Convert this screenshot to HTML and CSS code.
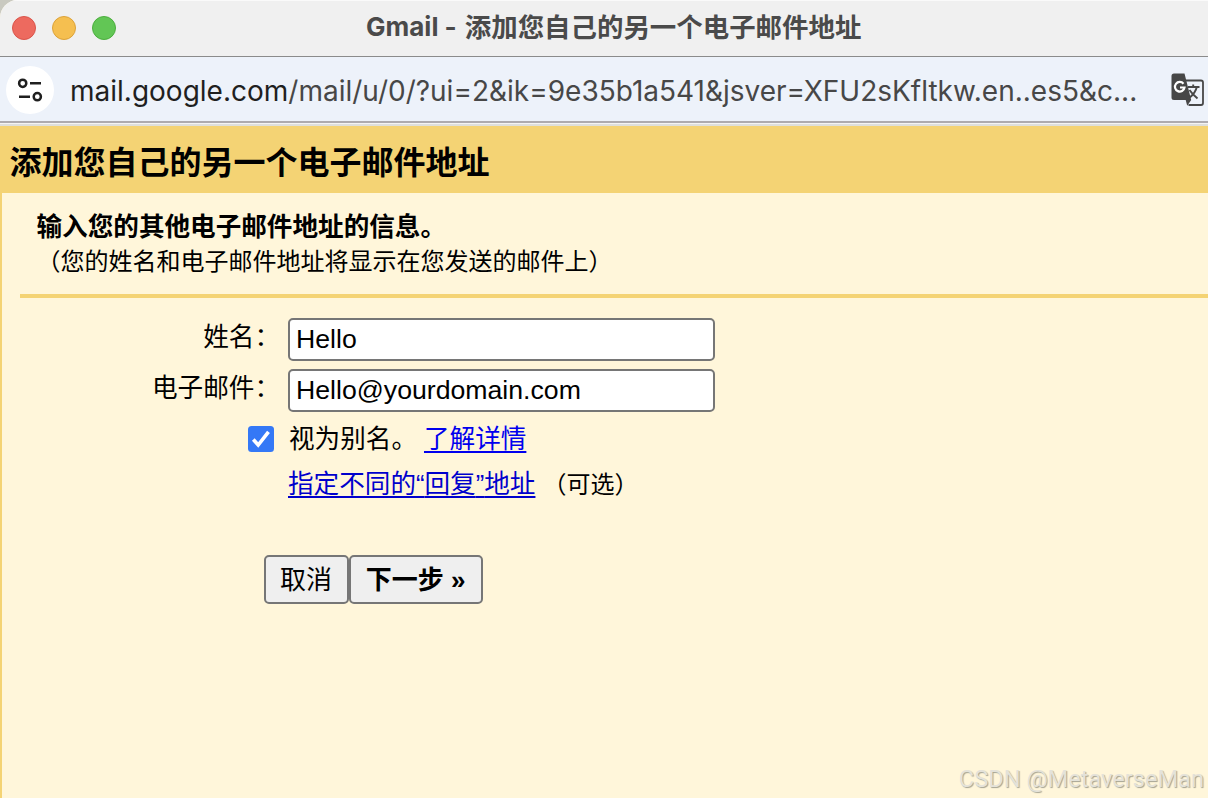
FILE: index.html
```html
<!doctype html>
<html lang="zh-CN">
 <head>
  <meta charset="UTF-8">
  <title>Gmail - 添加您自己的另一个电子邮件地址</title>
  <link rel="stylesheet" href="styles.css">
 </head>
 <body>

	<div id="wrap">

		<!-- 标题栏 -->
		<div class="titlebar">
			<div class="lights">
				<span class="light red"></span>
				<span class="light yellow"></span>
				<span class="light green"></span>
			</div>
			<div class="window_title"><span class="gmail">Gmail -</span> <span>添加您自己的另一个电子邮件地址</span></div>
		</div>

		<!-- 地址栏 -->
		<div class="urlbar">
			<div class="site_info">
				<svg width="48" height="48" viewBox="0 0 48 48" fill="none" stroke="#1f1f1f">
					<circle cx="16.7" cy="17.3" r="3.6" stroke-width="2.5"/>
					<circle cx="31.3" cy="30.7" r="3.6" stroke-width="2.5"/>
					<path d="M24 17.3h11M13 30.7h11" stroke-width="2.5"/>
				</svg>
			</div>
			<div class="url"><span class="host">mail.google.com</span><span class="path">/mail/u/0/?ui=2&amp;ik=9e35b1a541&amp;jsver=XFU2sKfltkw.en..es5&amp;c...</span></div>
			<svg class="translate" width="34" height="34" viewBox="0 0 34 34">
				<path d="M15 7.5h15a2 2 0 0 1 2 2v20.500a2 2 0 0 1-2 2H17.500" fill="none" stroke="#474747" stroke-width="1.8"/>
				<path d="M3 0.500h10.500l6.700 26.500-4 5.700-1.500-5.700H3a2.500 2.500 0 0 1-2.500-2.500V3A2.500 2.500 0 0 1 3 .5z" fill="#474747"/>
				<path d="M12.500 10.700a4.800 4.800 0 1 0 1 3.800H9" fill="none" stroke="#fff" stroke-width="2.2"/>
				<path d="M17 14h11.500M22.200 11.500v2.500M25.800 14c-1 4.500-3.500 7.500-7 10.500M18.500 17c2 3 4.500 5.500 8 8.500" fill="none" stroke="#474747" stroke-width="1.9"/>
			</svg>
		</div>

		<div class="page">
			<h1>添加您自己的另一个电子邮件地址</h1>

			<div class="content">
				<div class="intro">
					<b>输入您的其他电子邮件地址的信息。</b>
					<p>（您的姓名和电子邮件地址将显示在您发送的邮件上）</p>
				</div>

				<!-- 表单 -->
				<div class="form">
					<label class="name" for="name">姓名<span class="colon">：</span></label>
					<input type="text" id="name" value="Hello">

					<label class="name" for="email">电子邮件<span class="colon">：</span></label>
					<input type="text" id="email" value="Hello@yourdomain.com">

					<span class="check">
						<svg width="26" height="26" viewBox="0 0 26 26">
							<rect width="26" height="26" rx="3.500" fill="#3478f6"/>
							<path d="M5.300 13.500l4.900 5.500L20.500 5.800" fill="none" stroke="#fff" stroke-width="3.600"/>
						</svg>
					</span>
					<div class="alias">视为别名。<a href="#">了解详情</a></div>

					<div class="reply"><a href="#">指定不同的<i>“</i>回复<i>”</i>地址</a><span class="optional">（可选）</span></div>
				</div>

				<div class="buttons">
					<button type="button">取消</button>
					<button type="button" class="next">下一步 »</button>
				</div>
			</div>
		</div>

		<div class="watermark">CSDN @MetaverseMan</div>
	</div>

 </body>
</html>
```

FILE: styles.css
```css
*
{
	box-sizing:border-box;
}

body
{
	margin:0;
	background-color:#c9c9c0;
	font-family:"Liberation Sans", "Noto Sans CJK SC", sans-serif;
	color:#000;
}

#wrap
{
	position:relative;
	width:1208px;
	height:798px;
	overflow:hidden;
	display:flex;
	flex-direction:column;
	border-top-left-radius:18px;
	background-color:#fff6da;
}

/* 标题栏 */
.titlebar
{
	height:57px;
	display:grid;
	grid-template-columns:366px 1fr;
	align-items:center;
	padding-bottom:2px;
	background-color:#f0f0f0;
	border-top:1px solid #fafafa;
	border-bottom:1px solid #8b8b8b;
}

.lights
{
	display:flex;
	gap:16px;
	padding-left:12px;
}

.light
{
	width:24px;
	height:24px;
	border-radius:50%;
	border:1px solid;
}

.red { background-color:#ed6a5f; border-color:#d9554b; }
.yellow { background-color:#f5bf50; border-color:#dba23a; }
.green { background-color:#62c655; border-color:#4cae3e; }

.window_title
{
	display:flex;
	gap:8px;
	padding-bottom:3px;
	font-family:"Noto Sans CJK SC", sans-serif;
	font-size:26.45px;
	line-height:50px;
	font-weight:bold;
	color:#4a4a4a;
	white-space:nowrap;
}

.gmail
{
	padding-top:1px;
	font-family:Inter, sans-serif;
	font-size:26px;
}

/* 地址栏 */
.urlbar
{
	height:69px;
	display:flex;
	align-items:center;
	padding:0 3px 1px 6px;
	background-color:#edf2fa;
	border-bottom:2px solid #dedfdc;
	box-shadow:inset 0 -1px #f4f4f4, inset 0 -3px #adabaf;
}

.site_info
{
	width:48px;
	height:48px;
	border-radius:50%;
	background-color:#fff;
}

.url
{
	flex:1;
	margin-left:16px;
	padding-top:2px;
	font-family:Inter, sans-serif;
	font-size:28px;
	line-height:40px;
	white-space:nowrap;
	color:#474747;
}

.host
{
	color:#1f1f1f;
}

/* 页面 */
.page
{
	flex:1;
	display:flex;
	flex-direction:column;
}

h1
{
	margin:0;
	height:67px;
	padding:0 9.5px;
	font-size:32px;
	line-height:75px;
	background-color:#f4d374;
}

.content
{
	flex:1;
	padding:17px 0 0 18px;
	border-left:2px solid #f4d374;
}

.intro
{
	height:88px;
	padding-left:16.5px;
	border-bottom:4px solid #f4d374;
	font-size:25.6px;
	line-height:35px;
}

.intro b
{
	display:block;
}

.intro p
{
	margin:0;
	font-size:24px;
	line-height:34px;
}

.form
{
	display:grid;
	grid-template-columns:260px 427px;
	grid-template-rows:43px 43px 40px 34px;
	row-gap:8px;
	column-gap:8px;
	padding-top:20px;
	font-size:25.6px;
}

.name
{
	line-height:33px;
	text-align:right;
}

.colon
{
	font-family:"Noto Sans CJK TC", sans-serif;
}

input
{
	width:427px;
	height:43px;
	padding:0 6px;
	border:2px solid #767676;
	border-radius:5px;
	background-color:#fff;
	font-family:"Liberation Sans", sans-serif;
	font-size:26.67px;
	color:#000;
}

.check
{
	display:flex;
	justify-content:flex-end;
	padding:6px 6px 0 0;
}

.alias
{
	padding-left:1px;
	line-height:38px;
}

.alias a
{
	margin-left:7px;
}

a
{
	color:#0000ee;
	text-underline-offset:3px;
	text-decoration-thickness:2px;
	text-decoration-skip-ink:none;
}

.reply
{
	grid-column:2;
	line-height:33px;
	white-space:nowrap;
}

.reply a
{
	color:#0000cc;
}

.reply i
{
	font-style:normal;
}

.optional
{
	margin-left:7px;
	font-size:24px;
}

.buttons
{
	display:flex;
	padding:53px 0 0 244px;
}

button
{
	width:85px;
	height:49px;
	padding:0 1px 4px 0;
	border:2px solid #767676;
	border-radius:5px;
	background-color:#efefef;
	font-family:"Liberation Sans", "Noto Sans CJK SC", sans-serif;
	font-size:26px;
	color:#000;
}

.next
{
	width:134px;
	font-weight:bold;
}

/* 水印 */
.watermark
{
	position:absolute;
	right:4px;
	bottom:5px;
	font-family:Roboto, sans-serif;
	font-size:23.6px;
	line-height:28px;
	color:#e4e2d9;
	text-shadow:1px 1px 1px #a5a393;
}
```
